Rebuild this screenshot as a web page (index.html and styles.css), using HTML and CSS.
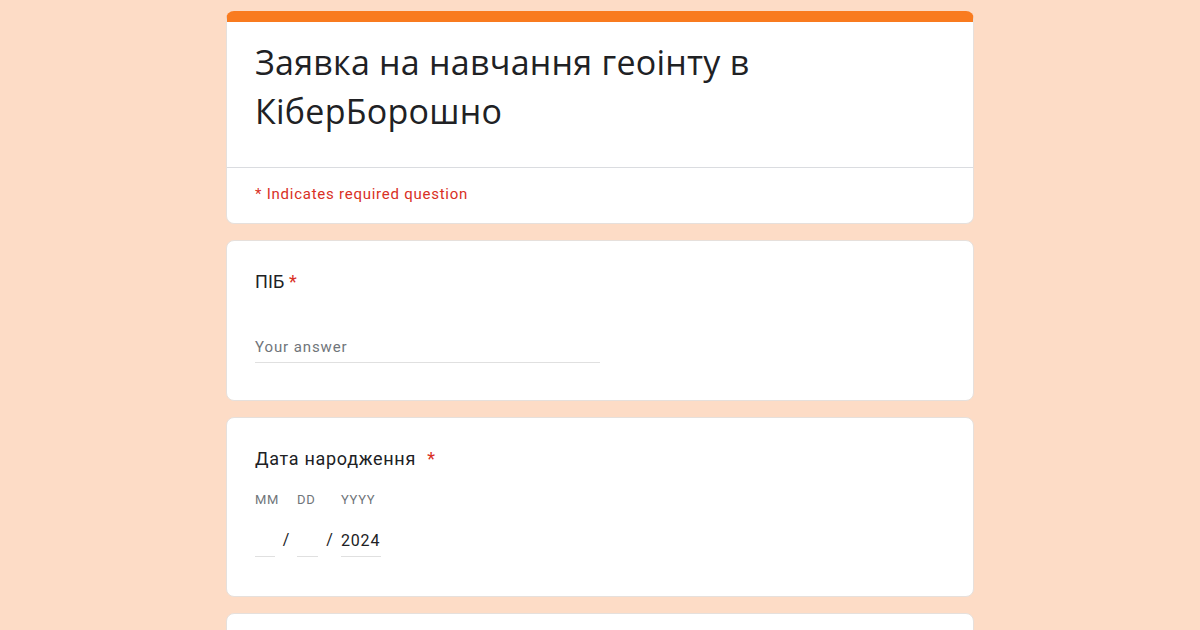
FILE: index.html
```html
<!DOCTYPE html>
<html lang="uk">
<head>
<meta charset="utf-8">
<title>Заявка на навчання геоінту в КіберБорошно</title>
<link rel="stylesheet" href="styles.css">
</head>
<body>
<main class="form">
  <section class="card header-card">
    <div class="header-main">
      <h1 class="title">Заявка на навчання геоінту в КіберБорошно</h1>
    </div>
    <div class="header-note">* Indicates required question</div>
  </section>

  <section class="card question q-text">
    <div class="q-label">ПІБ <span class="req">*</span></div>
    <div class="text-input">Your answer</div>
  </section>

  <section class="card question q-date">
    <div class="q-label">Дата народження <span class="req req-gap">*</span></div>
    <div class="date">
      <div class="date-part w-mm">
        <span class="date-lbl">MM</span>
        <span class="date-field"></span>
      </div>
      <span class="slash">/</span>
      <div class="date-part w-dd">
        <span class="date-lbl">DD</span>
        <span class="date-field"></span>
      </div>
      <span class="slash slash-2">/</span>
      <div class="date-part w-yy">
        <span class="date-lbl">YYYY</span>
        <span class="date-field">2024</span>
      </div>
    </div>
  </section>

  <section class="card question last"></section>
</main>
</body>
</html>
```

FILE: styles.css
```css
html, body {
  margin: 0;
  padding: 0;
}
body {
  background: #fddcc6;
  font-family: Roboto, "Liberation Sans", sans-serif;
  color: #202124;
  height: 630px;
  overflow: hidden;
}
.form {
  width: 748px;
  margin: 11px auto 0;
  display: flex;
  flex-direction: column;
  gap: 16px;
}
.card {
  background: #fff;
  border: 1px solid #e6e0dc;
  border-radius: 8px;
  box-sizing: border-box;
}
.header-card {
  border-top: 11px solid #f97b1f;
  overflow: hidden;
}
.header-main {
  padding: 16px 28px 31px;
  border-bottom: 1px solid #dadce0;
}
.title {
  margin: 0;
  font-family: "Open Sans", Roboto, sans-serif;
  font-weight: 400;
  font-size: 34px;
  line-height: 49px;
  letter-spacing: 0.25px;
  color: #202124;
  max-width: 560px;
}
.header-note {
  padding: 16px 28px 19px;
  font-size: 15px;
  line-height: 20px;
  color: #d93025;
  letter-spacing: 0.75px;
}
.question {
  padding: 29px 28px 37px;
}
.q-label {
  font-size: 18px;
  line-height: 24px;
  letter-spacing: 0.1px;
  color: #202124;
}
.q-date .q-label {
  letter-spacing: 0.7px;
}
.req {
  color: #d93025;
}
.req-gap {
  margin-left: 6px;
}
.text-input {
  margin-top: 43px;
  width: 345px;
  font-size: 15px;
  line-height: 20px;
  padding-bottom: 5px;
  color: #70757a;
  letter-spacing: 0.9px;
  border-bottom: 1px solid #e0e0e0;
}
.q-date {
  padding-bottom: 39px;
}
.date {
  display: flex;
  align-items: flex-end;
  margin-top: 21px;
}
.date-part {
  display: flex;
  flex-direction: column;
}
.date-lbl {
  font-size: 13px;
  line-height: 16px;
  color: #70757a;
  letter-spacing: 0.7px;
}
.date-field {
  margin-top: 23px;
  height: 26px;
  font-size: 16px;
  line-height: 20px;
  letter-spacing: 0.8px;
  color: #202124;
  border-bottom: 1px solid #e0e0e0;
  box-sizing: border-box;
}
.w-mm { width: 20px; }
.w-dd { width: 21px; }
.w-yy { width: 40px; }
.slash {
  font-size: 16px;
  line-height: 20px;
  width: 22px;
  text-align: center;
  padding-bottom: 7px;
  color: #202124;
}
.slash-2 {
  width: 23px;
}
.last {
  height: 80px;
}
```
